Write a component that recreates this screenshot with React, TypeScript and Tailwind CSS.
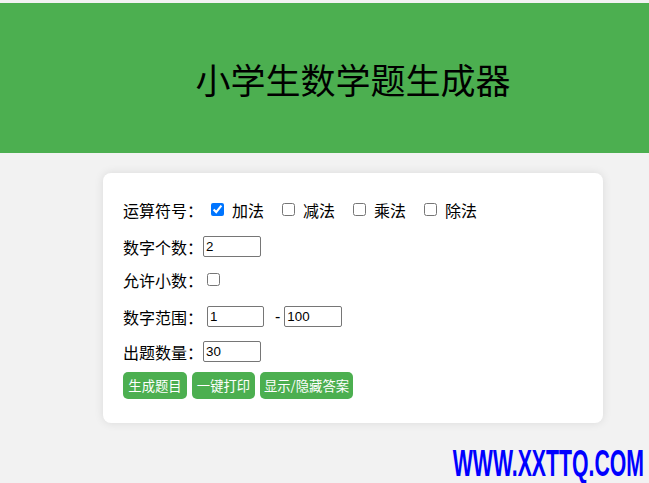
import { useState } from 'react';

const ops = [
  { key: 'add', label: '加法' },
  { key: 'sub', label: '减法' },
  { key: 'mul', label: '乘法' },
  { key: 'div', label: '除法' },
];

const cjk = "font-['Noto_Sans_CJK_SC','Noto_Sans',sans-serif]";
const inputCls =
  "h-[21px] border border-[#767676] rounded-[2px] px-[2px] text-[13.33px] font-['Liberation_Sans',sans-serif] text-black bg-white outline-none";

export default function App() {
  const [checked, setChecked] = useState<Record<string, boolean>>({ add: true, sub: false, mul: false, div: false });
  const [count, setCount] = useState('2');
  const [decimal, setDecimal] = useState(false);
  const [min, setMin] = useState('1');
  const [max, setMax] = useState('100');
  const [total, setTotal] = useState('30');

  return (
    <div className={`relative h-screen w-full overflow-hidden bg-[#f2f2f2] ${cjk}`}>
      <div className="w-[706px] pt-[3px]">
        {/* Header */}
        <div className="h-[150px] bg-[#4CAF50] flex items-center justify-center">
          <h1 className="text-[35px] font-normal text-black leading-none">小学生数学题生成器</h1>
        </div>

        {/* Form card */}
        <div className="mt-[20px] mx-auto w-[500px] bg-white rounded-lg shadow-[0_0_10px_rgba(0,0,0,0.1)] px-[20px] pt-[26px] pb-[24px] text-[16px] text-black">
          <div className="flex items-center h-[21px]">
            <span className="w-[80px]">运算符号：</span>
            {ops.map((op, i) => (
              <label key={op.key} className={`flex items-center ${i === 0 ? 'ml-[8px]' : 'ml-[18px]'}`}>
                <input
                  type="checkbox"
                  checked={checked[op.key]}
                  onChange={() => setChecked({ ...checked, [op.key]: !checked[op.key] })}
                  className="w-[13px] h-[13px] m-0"
                />
                <span className="ml-[8px]">{op.label}</span>
              </label>
            ))}
          </div>

          <div className="flex items-center h-[21px] mt-[16px]">
            <span className="w-[80px]">数字个数：</span>
            <input className={`${inputCls} w-[58px]`} value={count} onChange={e => setCount(e.target.value)} />
          </div>

          <div className="flex items-center h-[21px] mt-[12px]">
            <span className="w-[80px]">允许小数：</span>
            <input
              type="checkbox"
              checked={decimal}
              onChange={() => setDecimal(!decimal)}
              className="w-[13px] h-[13px] m-0 ml-[4px]"
            />
          </div>

          <div className="flex items-center h-[21px] mt-[16px]">
            <span className="w-[80px]">数字范围：</span>
            <input className={`${inputCls} w-[57px] ml-[4px]`} value={min} onChange={e => setMin(e.target.value)} />
            <span className="ml-[11px] font-['Liberation_Sans',sans-serif]">-</span>
            <input className={`${inputCls} w-[58px] ml-[4px]`} value={max} onChange={e => setMax(e.target.value)} />
          </div>

          <div className="flex items-center h-[21px] mt-[14px]">
            <span className="w-[80px]">出题数量：</span>
            <input className={`${inputCls} w-[58px]`} value={total} onChange={e => setTotal(e.target.value)} />
          </div>

          <div className="flex gap-[5px] mt-[10px]">
            <button className="w-[64px] h-[27px] bg-[#4CAF50] text-white text-[13.33px] rounded-[5px] flex items-center justify-center">生成题目</button>
            <button className="w-[63px] h-[27px] bg-[#4CAF50] text-white text-[13.33px] rounded-[5px] flex items-center justify-center">一键打印</button>
            <button className="w-[93px] h-[27px] bg-[#4CAF50] text-white text-[13.33px] rounded-[5px] flex items-center justify-center">显示/隐藏答案</button>
          </div>
        </div>
      </div>

      {/* Watermark */}
      <div className="absolute right-[5px] bottom-[1.5px] origin-bottom-right scale-x-[0.59] text-[#0000ff] font-bold text-[36px] leading-none font-['Liberation_Sans',sans-serif] tracking-[0px]">
        WWW.XXTTQ.COM
      </div>
    </div>
  );
}
